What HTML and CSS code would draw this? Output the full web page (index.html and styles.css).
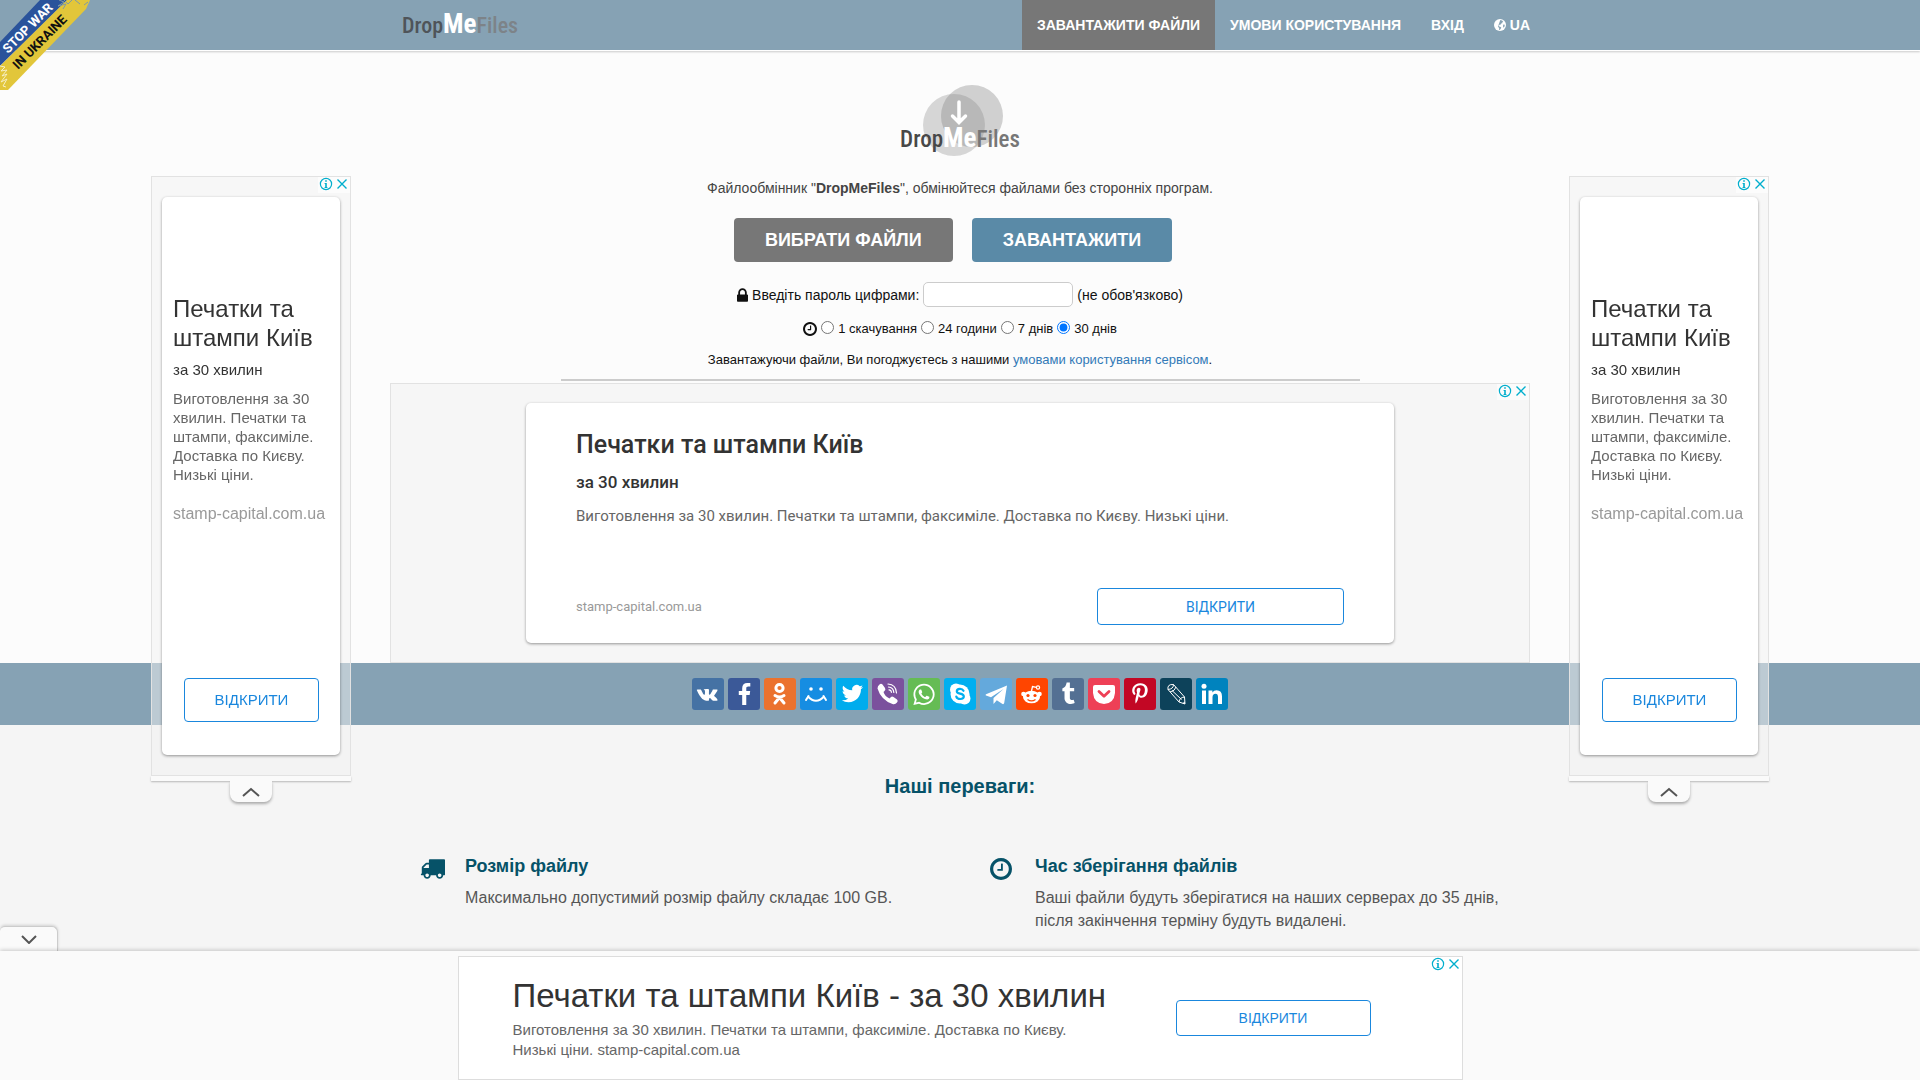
FILE: index.html
```html
<!DOCTYPE html>
<html lang="uk">
<head>
<meta charset="utf-8">
<meta name="viewport" content="width=device-width, initial-scale=1">
<title>DropMeFiles</title>
<link rel="stylesheet" href="styles.css">
</head>
<body>
<svg class="defs" aria-hidden="true">
  <symbol id="i-lock" viewBox="320 128 1152 1408"><path d="M640 768h512v-192q0-106-75-181t-181-75-181 75-75 181v192zm832 96v576q0 40-28 68t-68 28h-960q-40 0-68-28t-28-68v-576q0-40 28-68t68-28h32v-192q0-184 132-316t316-132 316 132 132 316v192h32q40 0 68 28t28 68z"/></symbol>
  <symbol id="i-clock" viewBox="128 128 1536 1536"><path d="M1024 544v448q0 14-9 23t-23 9h-320q-14 0-23-9t-9-23v-64q0-14 9-23t23-9h224v-352q0-14 9-23t23-9h64q14 0 23 9t9 23zm416 352q0-148-73-273t-198-198-273-73-273 73-198 198-73 273 73 273 198 198 273 73 273-73 198-198 73-273zm224 0q0 209-103 385.500t-279.500 279.500-385.500 103-385.500-103-279.500-279.500-103-385.500 103-385.500 279.500-279.500 385.500-103 385.500 103 279.500 279.500 103 385.500z"/></symbol>
  <symbol id="i-truck" viewBox="0 256 1792 1408"><path d="M640 1408q0-52-38-90t-90-38-90 38-38 90 38 90 90 38 90-38 38-90zm-384-512h384v-256h-158q-13 0-22 9l-195 195q-9 9-9 22v30zm1280 512q0-52-38-90t-90-38-90 38-38 90 38 90 90 38 90-38 38-90zm256-1088v1024q0 15-4 26.500t-13.500 18.500-16.500 11.500-23.500 6-22.500 2-25.500 0-22.500-.5q0 106-75 181t-181 75-181-75-75-181h-384q0 106-75 181t-181 75-181-75-75-181h-64q-3 0-22.500.5t-25.500 0-22.500-2-23.500-6-16.500-11.500-13.500-18.500-4-26.500q0-26 19-45t45-19v-320q0-8-.5-35t0-38 2.500-34.500 6.500-37 14-30.500 22.500-30l198-198q19-19 50.500-32t58.500-13h160v-192q0-26 19-45t45-19h1024q26 0 45 19t19 45z"/></symbol>
  <symbol id="i-info" viewBox="0 0 14 14"><circle cx="7" cy="7" r="5.600" fill="none" stroke="currentColor" stroke-width="1.200"/><path d="M6.200 3.200h1.600v1.600H6.200zM5.600 6h2.200v4h.6v1H5.600v-1h.6V7h-.6z"/></symbol>
  <symbol id="i-close" viewBox="0 0 14 14"><path d="M2.500 2.500l9 9M11.500 2.500l-9 9" fill="none" stroke="currentColor" stroke-width="1.400"/></symbol>
</svg>

<header class="topbar">
  <div class="container topbar-inner">
    <a class="wordmark" href="#"><span class="w-drop">Drop</span><span class="w-me">Me</span><span class="w-files">Files</span></a>
    <nav class="menu">
      <a class="active" href="#">ЗАВАНТАЖИТИ ФАЙЛИ</a>
      <a href="#">УМОВИ КОРИСТУВАННЯ</a>
      <a href="#">ВХІД</a>
      <a href="#"><svg class="globe" viewBox="0 0 12 12"><circle cx="6" cy="6" r="6" fill="#fff"/><path d="M6.300 1l1.700.4 1.200 1-1 .8.4.8-1.400.5-.4 1-1.300.3-.4.700-.8-.2.3 1 1.500.4 1.200.7-.6 1.400-1 1.200-.7-.3.200-1.700-1.300-1.300M9.300 5.600l1.500.1-.4 2.100-.8.9-.6-1.400z" fill="#86a2b4"/></svg> UA</a>
    </nav>
  </div>
</header>
<a class="ribbon" href="#" aria-label="Stop war in Ukraine">
  <svg viewBox="0 0 90 90">
    <path d="M40 0H67L0 66V42z" fill="#2a539b"/>
    <path d="M67 0H90L86 9 8 90H0V66z" fill="#e2c63a"/>
    <path d="M59 0l5 2-6 4 8-2-3 5M64 0l4 4 4-4M75 0l5 4M84 5l4-3" fill="none" stroke="#7f99a6" stroke-width="1"/>
    <path d="M0 66l5 1-4 4 6-1-5 6 5-2-6 8 6-3-4 7 3 1" fill="none" stroke="#f7efc4" stroke-width="1"/>
    <text transform="translate(8 54) rotate(-45)" fill="#fff">STOP WAR</text>
    <text transform="translate(18 70) rotate(-45)" fill="#111">IN UKRAINE</text>
  </svg>
</a>

<main class="page">
  <section class="hero">
    <div class="logo">
      <svg class="logo-art" viewBox="0 0 86 78"><defs><clipPath id="lens"><circle cx="37" cy="40" r="31"/></clipPath></defs><circle cx="37" cy="40" r="31" fill="#d6d6d6"/><circle cx="55" cy="31" r="31" fill="#d0d0d0"/><circle cx="55" cy="31" r="31" fill="#b8b8b8" clip-path="url(#lens)"/><path d="M42 17v20M35.500 31L42 37.500 48.500 31" fill="none" stroke="#fff" stroke-width="3.500" stroke-linecap="round"/></svg>
      <div class="wordmark big"><span class="w-drop">Drop</span><span class="w-me">Me</span><span class="w-files">Files</span></div>
    </div>
    <p class="lead">Файлообмінник "<b>DropMeFiles</b>", обмінюйтеся файлами без сторонніх програм.</p>
    <div class="actions">
      <button class="btn pick" type="button">ВИБРАТИ ФАЙЛИ</button>
      <button class="btn send" type="button">ЗАВАНТАЖИТИ</button>
    </div>
    <div class="password">
      <svg class="lock"><use href="#i-lock"/></svg>
      <label for="pass">Введіть пароль цифрами:</label>
      <input id="pass" type="text">
      <span>(не обов'язково)</span>
    </div>
    <div class="term">
      <svg class="clock"><use href="#i-clock"/></svg>
      <input type="radio" name="t" id="t1"><label for="t1">1 скачування</label>
      <input type="radio" name="t" id="t2"><label for="t2">24 години</label>
      <input type="radio" name="t" id="t3"><label for="t3">7 днів</label>
      <input type="radio" name="t" id="t4" checked><label for="t4">30 днів</label>
    </div>
    <p class="agree">Завантажуючи файли, Ви погоджуєтесь з нашими <a href="#">умовами користування сервісом</a>.</p>
    <hr class="rule">
    <aside class="ad mid-ad">
      <div class="choices"><svg><use href="#i-info"/></svg><svg><use href="#i-close"/></svg></div>
      <div class="ad-card mid-card">
        <h3>Печатки та штампи Київ</h3>
        <h4>за 30 хвилин</h4>
        <p>Виготовлення за 30 хвилин. Печатки та штампи, факсиміле. Доставка по Києву. Низькі ціни.</p>
        <div class="mid-foot"><span>stamp-capital.com.ua</span><button class="open" type="button">ВІДКРИТИ</button></div>
      </div>
    </aside>
  </section>

  <section class="share">
    <a href="#" aria-label="VK" class="s vk"><svg viewBox="-510 -570 2960 2960"><path d="M1853 520q23 64-150 294-24 32-65 85-78 100-90 131-17 41 14 81 17 21 81 82h1l1 1 1 1 2 2q141 131 191 221 3 5 6.500 12.500t7 26.500-.5 34-25 27.500-59 12.500l-256 4q-24 5-56-5t-52-22l-20-12q-30-21-70-64t-68.500-77.500-61-58-56.500-15.500q-3 1-8 3.500t-17 14.500-21.500 29.500-17 52-6.500 77.500q0 15-3.500 27.500t-7.500 18.500l-4 5q-18 19-53 22h-115q-71 4-146-16.500t-131.500-53-103-66-70.500-57.500l-25-24q-10-10-27.500-30t-71.500-91-106-151-122.500-211-130.500-272q-6-16-6-27t3-16l4-6q15-19 57-19l274-2q12 2 23 6.500t16 8.500l5 3q16 11 24 32 20 50 46 103.500t41 81.500l16 29q29 60 56 104t48.500 68.500 41.500 38.500 34 14 27-5q2-1 5-5t12-22 13.500-47 9.500-81 0-125q-2-40-9-73t-14-46l-6-12q-25-34-85-43-13-2 5-24 16-19 38-30 53-26 239-24 82 1 135 13 20 5 33.500 13.500t20.500 24 10.500 32 3.500 45.500-1 55-2.500 70.500-1.500 82.500q0 11-1 42t-.5 48 3.500 40.500 11.500 39 22.500 24.500q8 2 17 4t26-11 38-34.500 52-67 68-107.500q60-104 107-225 4-10 10-17.500t11-10.500l4-3 5-2.500 13-3 20-.5 288-2q39-5 64 2.500t31 16.500z"/></svg></a>
    <a href="#" aria-label="Facebook" class="s fb"><svg viewBox="-330 -370 2400 2400"><path d="M1343 12v264h-157q-86 0-116 36t-30 108v189h293l-39 296h-254v759h-306v-759h-255v-296h255v-218q0-186 104-288.500t277-102.500q147 0 228 12z"/></svg></a>
    <a href="#" aria-label="Одноклассники" class="s ok"><svg viewBox="0 0 32 32"><g fill="none" stroke="#fff" stroke-width="3" stroke-linecap="round"><circle cx="15.500" cy="10" r="3.600"/><path d="M11 17.500q4.500 3 9 0M15.500 19.500l-4.500 5.500M15.500 19.500l4.500 5.500"/></g></svg></a>
    <a href="#" aria-label="Мой Мир" class="s mm"><svg viewBox="0 0 32 32"><circle cx="11" cy="11" r="1.800"/><circle cx="21" cy="11" r="1.800"/><path d="M6 22l2.500-4M26 22l-2.500-4M8 18.500q8 8.500 16 0" fill="none" stroke="#fff" stroke-width="2" stroke-linecap="round"/></svg></a>
    <a href="#" aria-label="Twitter" class="s tw"><svg viewBox="-6.500 -5.500 36 36"><path d="M23.953 4.570a10 10 0 01-2.825.775 4.958 4.958 0 002.163-2.723c-.951.555-2.005.959-3.127 1.184a4.920 4.920 0 00-8.384 4.482C7.690 8.095 4.067 6.130 1.640 3.162a4.822 4.822 0 00-.666 2.475c0 1.710.870 3.213 2.188 4.096a4.904 4.904 0 01-2.228-.616v.060a4.923 4.923 0 003.946 4.827 4.996 4.996 0 01-2.212.085 4.936 4.936 0 004.604 3.417 9.867 9.867 0 01-6.102 2.105c-.390 0-.779-.023-1.170-.067a13.995 13.995 0 007.557 2.209c9.053 0 13.998-7.496 13.998-13.985 0-.210 0-.420-.015-.630A9.935 9.935 0 0024 4.590z"/></svg></a>
    <a href="#" aria-label="Viber" class="s vb"><svg viewBox="0 0 32 32"><path d="M7.500 6.500Q9 5 10.500 6.500L13 10q1 2-.5 3l-1 1q1.500 4.500 6 6.500l1.500-1.500q1-1 2.500 0l3.500 2.500q1.500 1.500 0 3-2 2.500-4.500 1.500Q9 22 5.500 10.500 5.500 8 7.500 6.500z"/><path d="M16 6q8 .5 8.500 9M16.500 9q5 .5 5.300 5.500M17 11.800q2.300.2 2.400 2.500" fill="none" stroke="#fff" stroke-width="1.200" stroke-linecap="round"/></svg></a>
    <a href="#" aria-label="WhatsApp" class="s wa"><svg viewBox="-6 -6.500 36 36"><path d="M17.472 14.382c-.297-.149-1.758-.867-2.030-.967-.273-.099-.471-.148-.670.150-.197.297-.767.966-.940 1.164-.173.199-.347.223-.644.075-.297-.150-1.255-.463-2.390-1.475-.883-.788-1.480-1.761-1.653-2.059-.173-.297-.018-.458.130-.606.134-.133.298-.347.446-.520.149-.174.198-.298.298-.497.099-.198.050-.371-.025-.520-.075-.149-.669-1.612-.916-2.207-.242-.579-.487-.500-.669-.510-.173-.008-.371-.010-.570-.010-.198 0-.520.074-.792.372-.272.297-1.040 1.016-1.040 2.479 0 1.462 1.065 2.875 1.213 3.074.149.198 2.096 3.200 5.077 4.487.709.306 1.262.489 1.694.625.712.227 1.360.195 1.871.118.571-.085 1.758-.719 2.006-1.413.248-.694.248-1.289.173-1.413-.074-.124-.272-.198-.570-.347m-5.421 7.403h-.004a9.870 9.870 0 01-5.031-1.378l-.361-.214-3.741.982.998-3.648-.235-.374a9.860 9.860 0 01-1.510-5.260c.001-5.450 4.436-9.884 9.888-9.884 2.640 0 5.122 1.030 6.988 2.898a9.825 9.825 0 012.893 6.994c-.003 5.450-4.437 9.884-9.885 9.884m8.413-18.297A11.815 11.815 0 0012.050 0C5.495 0 .160 5.335.157 11.892c0 2.096.547 4.142 1.588 5.945L.057 24l6.305-1.654a11.882 11.882 0 005.683 1.448h.005c6.554 0 11.890-5.335 11.893-11.893a11.821 11.821 0 00-3.480-8.413z"/></svg></a>
    <a href="#" aria-label="Skype" class="s sk"><svg viewBox="0 0 32 32"><circle cx="16" cy="16" r="9.500"/><circle cx="12" cy="11.500" r="6"/><circle cx="20.500" cy="20.500" r="6"/><path d="M19.500 12.800q-1-2-3.700-1.900-3 .2-3 2.400 0 1.700 3.300 2.400 3.700.7 3.700 2.800 0 2.300-3.500 2.500-3.200 0-4-2.400" fill="none" stroke="#00aff0" stroke-width="2.200" stroke-linecap="round"/></svg></a>
    <a href="#" aria-label="Telegram" class="s tg"><svg viewBox="0 0 32 32"><path d="M27 7.500L6 16.300q-1 .7 0 1.200l5 1.800L23.500 11 13.500 20v6l3.300-3.800 5.700 3.800q1.300.5 1.700-1z"/></svg></a>
    <a href="#" aria-label="Reddit" class="s rd"><svg viewBox="0 0 32 32"><ellipse cx="15.500" cy="19" rx="8.500" ry="6.300"/><circle cx="7.500" cy="16" r="2.300"/><circle cx="23.500" cy="16" r="2.300"/><circle cx="22" cy="9.500" r="1.600" fill="none" stroke="#fff" stroke-width="1.200"/><path d="M15.500 13l1-4.500 4 .9" fill="none" stroke="#fff" stroke-width="1.300"/><circle cx="12" cy="17.500" r="1.600" fill="#ff4500"/><circle cx="19" cy="17.500" r="1.600" fill="#ff4500"/><path d="M11.500 21.500q4 2.800 8 0" fill="none" stroke="#ff4500" stroke-width="1.200"/></svg></a>
    <a href="#" aria-label="Tumblr" class="s tb"><svg viewBox="-350 -350 2480 2480"><path d="M1328 1329l80 237q-23 35-111 66t-177 32q-104 2-190.500-26t-142.500-74-95-106-55.500-120-16.500-118v-544h-168v-215q72-26 129-69.500t91-90 58-102 34-99 15-88.500q1-5 4.500-8.500t7.500-3.500h244v424h333v252h-334v518q0 30 6.500 56t22.500 52.500 49.500 41.500 81.500 14q78-2 134-29z"/></svg></a>
    <a href="#" aria-label="Pocket" class="s pk"><svg viewBox="0 0 32 32"><path d="M7 7h18q2 0 2 2v6q-1 10.500-11 11Q6 25.500 5 15V9q0-2 2-2z"/><path d="M11 13.500l5 4.800 5-4.800" fill="none" stroke="#ee4056" stroke-width="2.800" stroke-linecap="round" stroke-linejoin="round"/></svg></a>
    <a href="#" aria-label="Pinterest" class="s pt"><svg viewBox="-420 -430 2640 2640"><path d="M256 597q0-108 37.500-203.500t103.500-166.500 152-123 185-78 202-26q158 0 294 66.500t221 193.500 85 287q0 96-19 188t-60 177-100 149.500-145 103-189 38.500q-68 0-135-32t-96-88q-10 39-28 112.500t-23.500 95-20.500 71-26 71-32 62.500-46 77.500-62 86.500l-14 5-9-10q-15-157-15-188 0-92 21.500-206.500t66.500-287.500 52-203q-32-65-32-169 0-83 52-156t132-73q61 0 95 40.500t34 102.500q0 66-44 191t-44 187q0 63 45 104.500t109 41.500q55 0 102-25t78.500-68 56-95 38-110.500 20-111 6.500-99.500q0-173-109.500-269.500t-285.500-96.500q-200 0-334 129.500t-134 328.500q0 44 12.500 85t27 65 27 45.500 12.500 30.500q0 28-15 73t-37 45q-2 0-17-3-51-15-90.500-56t-61-94.500-32.500-108-11-106.500z"/></svg></a>
    <a href="#" aria-label="LiveJournal" class="s lj"><svg viewBox="0 0 32 32"><g fill="none" stroke="#fff" stroke-width="1"><path d="M8 11.500Q7 6 13.500 6.500L24.500 19l.5 7-6-2zM8 11.500q5.500-.5 5.500-5M10 14q5-1 6-5M19 24q.5-4.500 5.500-5M12 12.500l9.500 9"/></g><path d="M22.500 25.200L25 26l-.2-2.500z"/></svg></a>
    <a href="#" aria-label="LinkedIn" class="s li"><svg viewBox="0 0 32 32"><circle cx="8" cy="8.200" r="2.500"/><path d="M6 12.500h4V26H6zM12.500 12.500h3.900v2q1.300-2.300 4.200-2.300 5.400.2 5.400 6V26h-4v-7q0-3.200-2.500-3.300-3 .1-3 3.500V26h-4z"/></svg></a>
  </section>

  <section class="features">
    <h2>Наші переваги:</h2>
    <div class="feature-grid">
      <article class="feature">
        <svg class="truck"><use href="#i-truck"/></svg>
        <div><h3>Розмір файлу</h3><p>Максимально допустимий розмір файлу складає 100 GB.</p></div>
      </article>
      <article class="feature">
        <svg class="clock-lg"><use href="#i-clock"/></svg>
        <div><h3>Час зберігання файлів</h3><p>Ваші файли будуть зберігатися на наших серверах до 35 днів, після закінчення терміну будуть видалені.</p></div>
      </article>
    </div>
  </section>
</main>

<aside class="side left">
  <div class="ad side-ad">
    <div class="choices"><svg><use href="#i-info"/></svg><svg><use href="#i-close"/></svg></div>
    <div class="ad-card side-card">
      <h3>Печатки та штампи Київ</h3>
      <h4>за 30 хвилин</h4>
      <p>Виготовлення за 30 хвилин. Печатки та штампи, факсиміле. Доставка по Києву. Низькі ціни.</p>
      <span class="url">stamp-capital.com.ua</span>
      <button class="open" type="button">ВІДКРИТИ</button>
    </div>
  </div>
  <div class="strip"></div>
  <button class="fold" type="button" aria-label="Згорнути"><svg viewBox="0 0 18 10"><path d="M1 9l8-7 8 7"/></svg></button>
</aside>
<aside class="side right">
  <div class="ad side-ad">
    <div class="choices"><svg><use href="#i-info"/></svg><svg><use href="#i-close"/></svg></div>
    <div class="ad-card side-card">
      <h3>Печатки та штампи Київ</h3>
      <h4>за 30 хвилин</h4>
      <p>Виготовлення за 30 хвилин. Печатки та штампи, факсиміле. Доставка по Києву. Низькі ціни.</p>
      <span class="url">stamp-capital.com.ua</span>
      <button class="open" type="button">ВІДКРИТИ</button>
    </div>
  </div>
  <div class="strip"></div>
  <button class="fold" type="button" aria-label="Згорнути"><svg viewBox="0 0 18 10"><path d="M1 9l8-7 8 7"/></svg></button>
</aside>

<aside class="anchor">
  <button class="anchor-tab" type="button" aria-label="Сховати"><svg viewBox="0 0 16 9"><path d="M1 1l7 7 7-7"/></svg></button>
  <div class="anchor-body">
    <div class="anchor-ad">
      <div class="choices"><svg><use href="#i-info"/></svg><svg><use href="#i-close"/></svg></div>
      <div class="anchor-text">
        <h3>Печатки та штампи Київ - за 30 хвилин</h3>
        <p>Виготовлення за 30 хвилин. Печатки та штампи, факсиміле. Доставка по Києву. Низькі ціни. stamp-capital.com.ua</p>
      </div>
      <button class="open" type="button">ВІДКРИТИ</button>
    </div>
  </div>
</aside>
</body>
</html>
```
FILE: styles.css
```css
* { box-sizing: border-box; }
body {
  margin: 0;
  min-height: 100vh;
  display: flex;
  flex-direction: column;
  background: #fcfcfc;
  color: #111;
  font: 14px/20px "Liberation Sans", Arial, sans-serif;
}
h2, h3, h4, p { margin: 0; }
a { color: #337ab7; text-decoration: none; }
button { font: inherit; cursor: pointer; }
svg { fill: currentColor; }
.defs { position: absolute; width: 0; height: 0; }
.container { width: 100%; max-width: 1170px; margin: 0 auto; }

/* Top bar */
.topbar { background: #86a2b4; border-bottom: 1px solid #fff; box-shadow: 0 1px 2px rgba(0, 0, 0, .2); }
.topbar-inner { display: flex; justify-content: space-between; height: 50px; }
.menu { display: flex; }
.menu a { padding: 15px; color: #fff; font-weight: bold; }
.menu .active { background: #777; }
.globe { width: 12px; height: 12px; vertical-align: -1px; }
.wordmark {
  display: flex;
  align-items: baseline;
  padding: 8px 0 0 27px;
  font: 500 22px/32px "Liberation Sans Narrow", "Roboto Condensed", "Open Sans Condensed", "Liberation Sans", sans-serif;
}
.w-drop { color: #4f5459; }
.w-me { color: #fff; font-size: 27px; font-weight: bold; }
.w-files { color: #7d8388; }

.ribbon { position: absolute; left: 0; top: 0; width: 90px; height: 90px; }
.ribbon svg { display: block; width: 90px; height: 90px; }
.ribbon text { font: bold 13px Roboto, sans-serif; }

/* Upload block */
.page { flex: 1; display: flex; flex-direction: column; }
.hero { display: flex; flex-direction: column; align-items: center; padding: 34px 16px 0; }
.logo { display: flex; flex-direction: column; align-items: center; height: 93px; }
.logo-art { width: 86px; height: 78px; flex: none; }
.wordmark.big { padding: 0; margin-top: -41px; font-size: 23px; }
.big .w-drop { color: #484848; }
.big .w-me { font-size: 27px; }
.big .w-files { color: #777; }
.lead { color: #444; }
.actions { display: flex; gap: 19px; margin: 20px 14px 20px 0; }
.btn { height: 44px; padding: 0 31px; border: 0; border-radius: 4px; color: #fff; font-size: 18px; font-weight: bold; }
.pick { background: #777; }
.send { background: #5a8aa7; }
.password { display: flex; align-items: center; gap: 4px; }
.lock { width: 11px; height: 14px; }
.password input { width: 150px; height: 25px; border: 1px solid #ccc; border-radius: 5px; background: #fff; }
.term { display: flex; align-items: center; gap: 4px; margin: 12px 0 11px; font-size: 13px; }
.term input { width: 13px; height: 13px; margin: 0 0 4px; }
.clock { width: 14px; height: 14px; }
.agree { font-size: 13px; }
.rule { width: 100%; max-width: 799px; height: 2px; margin: 9px 0 2px; border: 0; background: #ccc; }

/* Advertising */
.ad { position: relative; border: 1px solid #e2e2e2; background: #f6f6f6; }
.choices { position: absolute; top: 0; right: 0; display: flex; gap: 2px; padding: 0 1px 2px; background: rgba(255, 255, 255, .6); color: #00aecd; }
.choices svg { width: 14px; height: 14px; }
.ad-card { display: flex; flex-direction: column; align-items: flex-start; background: #fff; border-radius: 5px; box-shadow: 0 1px 3px rgba(0, 0, 0, .4); }
.ad-card h3, .ad-card h4 { color: #333; font-weight: normal; }
.ad-card p, .anchor-text p { color: #666; }
.open { border: 1px solid #1a87dd; border-radius: 4px; background: #fff; color: #1a87dd; }

.mid-ad { width: 100%; max-width: 1140px; height: 280px; padding: 19px 16px 0; display: flex; justify-content: center; }
.mid-card { width: 100%; max-width: 868px; height: 240px; padding: 26px 50px 18px; font-family: Roboto, "Liberation Sans", sans-serif; }
.mid-card h3 { font-size: 25px; line-height: 32px; font-weight: 500; }
.mid-card h4 { margin-top: 11px; font-size: 17px; line-height: 20px; font-weight: 500; }
.mid-card p { margin-top: 14px; font-size: 15px; }
.mid-foot { display: flex; align-items: center; justify-content: space-between; width: 100%; margin-top: auto; color: #999; font-size: 13px; }
.mid-foot .open { width: 247px; height: 37px; font-size: 14px; }

.side { position: fixed; top: 176px; width: 200px; display: flex; flex-direction: column; align-items: center; }
.left { left: calc(50% - 809px); }
.right { left: calc(50% + 609px); }
.side-ad { width: 200px; height: 600px; padding: 20px 10px 19px; background: rgba(242, 242, 242, .5); }
.side-card { height: 558px; padding: 97px 10px 33px 11px; }
.side-card h3 { font-size: 24px; line-height: 29px; }
.side-card h4 { margin-top: 8px; font-size: 15px; }
.side-card p { margin-top: 9px; font-size: 15px; line-height: 19px; }
.side-card .url { margin-top: 20px; color: #999; font-size: 16px; }
.side-card .open { align-self: center; width: 135px; height: 44px; margin-top: auto; font-size: 15px; }
.strip { width: 200px; height: 5px; background: #fafafa; box-shadow: 0 1px 2px rgba(0, 0, 0, .25); }
.fold { width: 42px; height: 21px; padding: 0; border: 0; border-radius: 0 0 8px 8px; background: #fafafa; box-shadow: 0 2px 3px rgba(0, 0, 0, .3); clip-path: inset(0 -4px -6px); }
.fold svg { display: block; width: 18px; height: 10px; margin: 0 auto; }
.fold path, .anchor-tab path { fill: none; stroke: #555; stroke-width: 2; }

/* Share bar */
.share { display: flex; justify-content: center; gap: 4px; height: 62px; padding: 15px 16px; background: #86a2b4; }
.s { width: 32px; height: 32px; border-radius: 3px; color: #fff; }
.s svg { display: block; width: 32px; height: 32px; }
.vk { background: #4572a4; }
.fb { background: #3b5998; }
.ok { background: #eb722e; }
.mm { background: #168de2; }
.tw { background: #00aced; }
.vb { background: #7b519d; }
.wa { background: #65bc54; }
.sk { background: #00aff0; }
.tg { background: #64a9dc; }
.rd { background: #ff4500; }
.tb { background: #547093; }
.pk { background: #ee4056; }
.pt { background: #c20724; }
.lj { background: #0d425a; }
.li { background: #0083be; }

/* Features */
.features { flex: 1; padding: 49px 16px 0; background: #f5f5f5; }
.features h2 { color: #065268; font-size: 20px; line-height: 24px; text-align: center; }
.feature-grid { display: grid; grid-template-columns: 1fr 1fr; width: 100%; max-width: 1140px; margin: 56px auto 0; }
.feature { display: grid; grid-template-columns: 25px 1fr; gap: 20px; padding: 0 24px 0 30px; color: #065268; }
.feature h3 { margin-bottom: 7px; font-size: 18px; line-height: 25px; }
.feature p { color: #555; font-size: 16px; line-height: 23px; }
.truck { width: 25px; height: 20px; margin-top: 5px; }
.clock-lg { width: 22px; height: 22px; margin-top: 4px; }

/* Bottom anchor banner */
.anchor { position: fixed; left: 0; right: 0; bottom: 0; }
.anchor-tab { display: block; width: 58px; height: 25px; padding: 0; border: 1px solid #ccc; border-width: 1px 1px 0 0; border-radius: 5px 6px 0 0; background: #fafafa; box-shadow: 0 -1px 3px rgba(0, 0, 0, .15); }
.anchor-tab svg { width: 16px; height: 9px; }
.anchor-body { padding: 5px 16px 0; background: #fafafa; box-shadow: 0 -1px 4px rgba(0, 0, 0, .2); }
.anchor-ad { position: relative; display: flex; align-items: center; justify-content: space-between; width: 100%; max-width: 1005px; height: 124px; margin: 0 auto; padding: 0 91px 0 54px; border: 1px solid #ddd; background: #fff; }
.anchor-text { width: 620px; }
.anchor-text h3 { color: #333; font-size: 33px; line-height: 40px; font-weight: normal; }
.anchor-text p { margin-top: 4px; font-size: 15px; width: 600px; }
.anchor-ad .open { width: 195px; height: 36px; }
```
